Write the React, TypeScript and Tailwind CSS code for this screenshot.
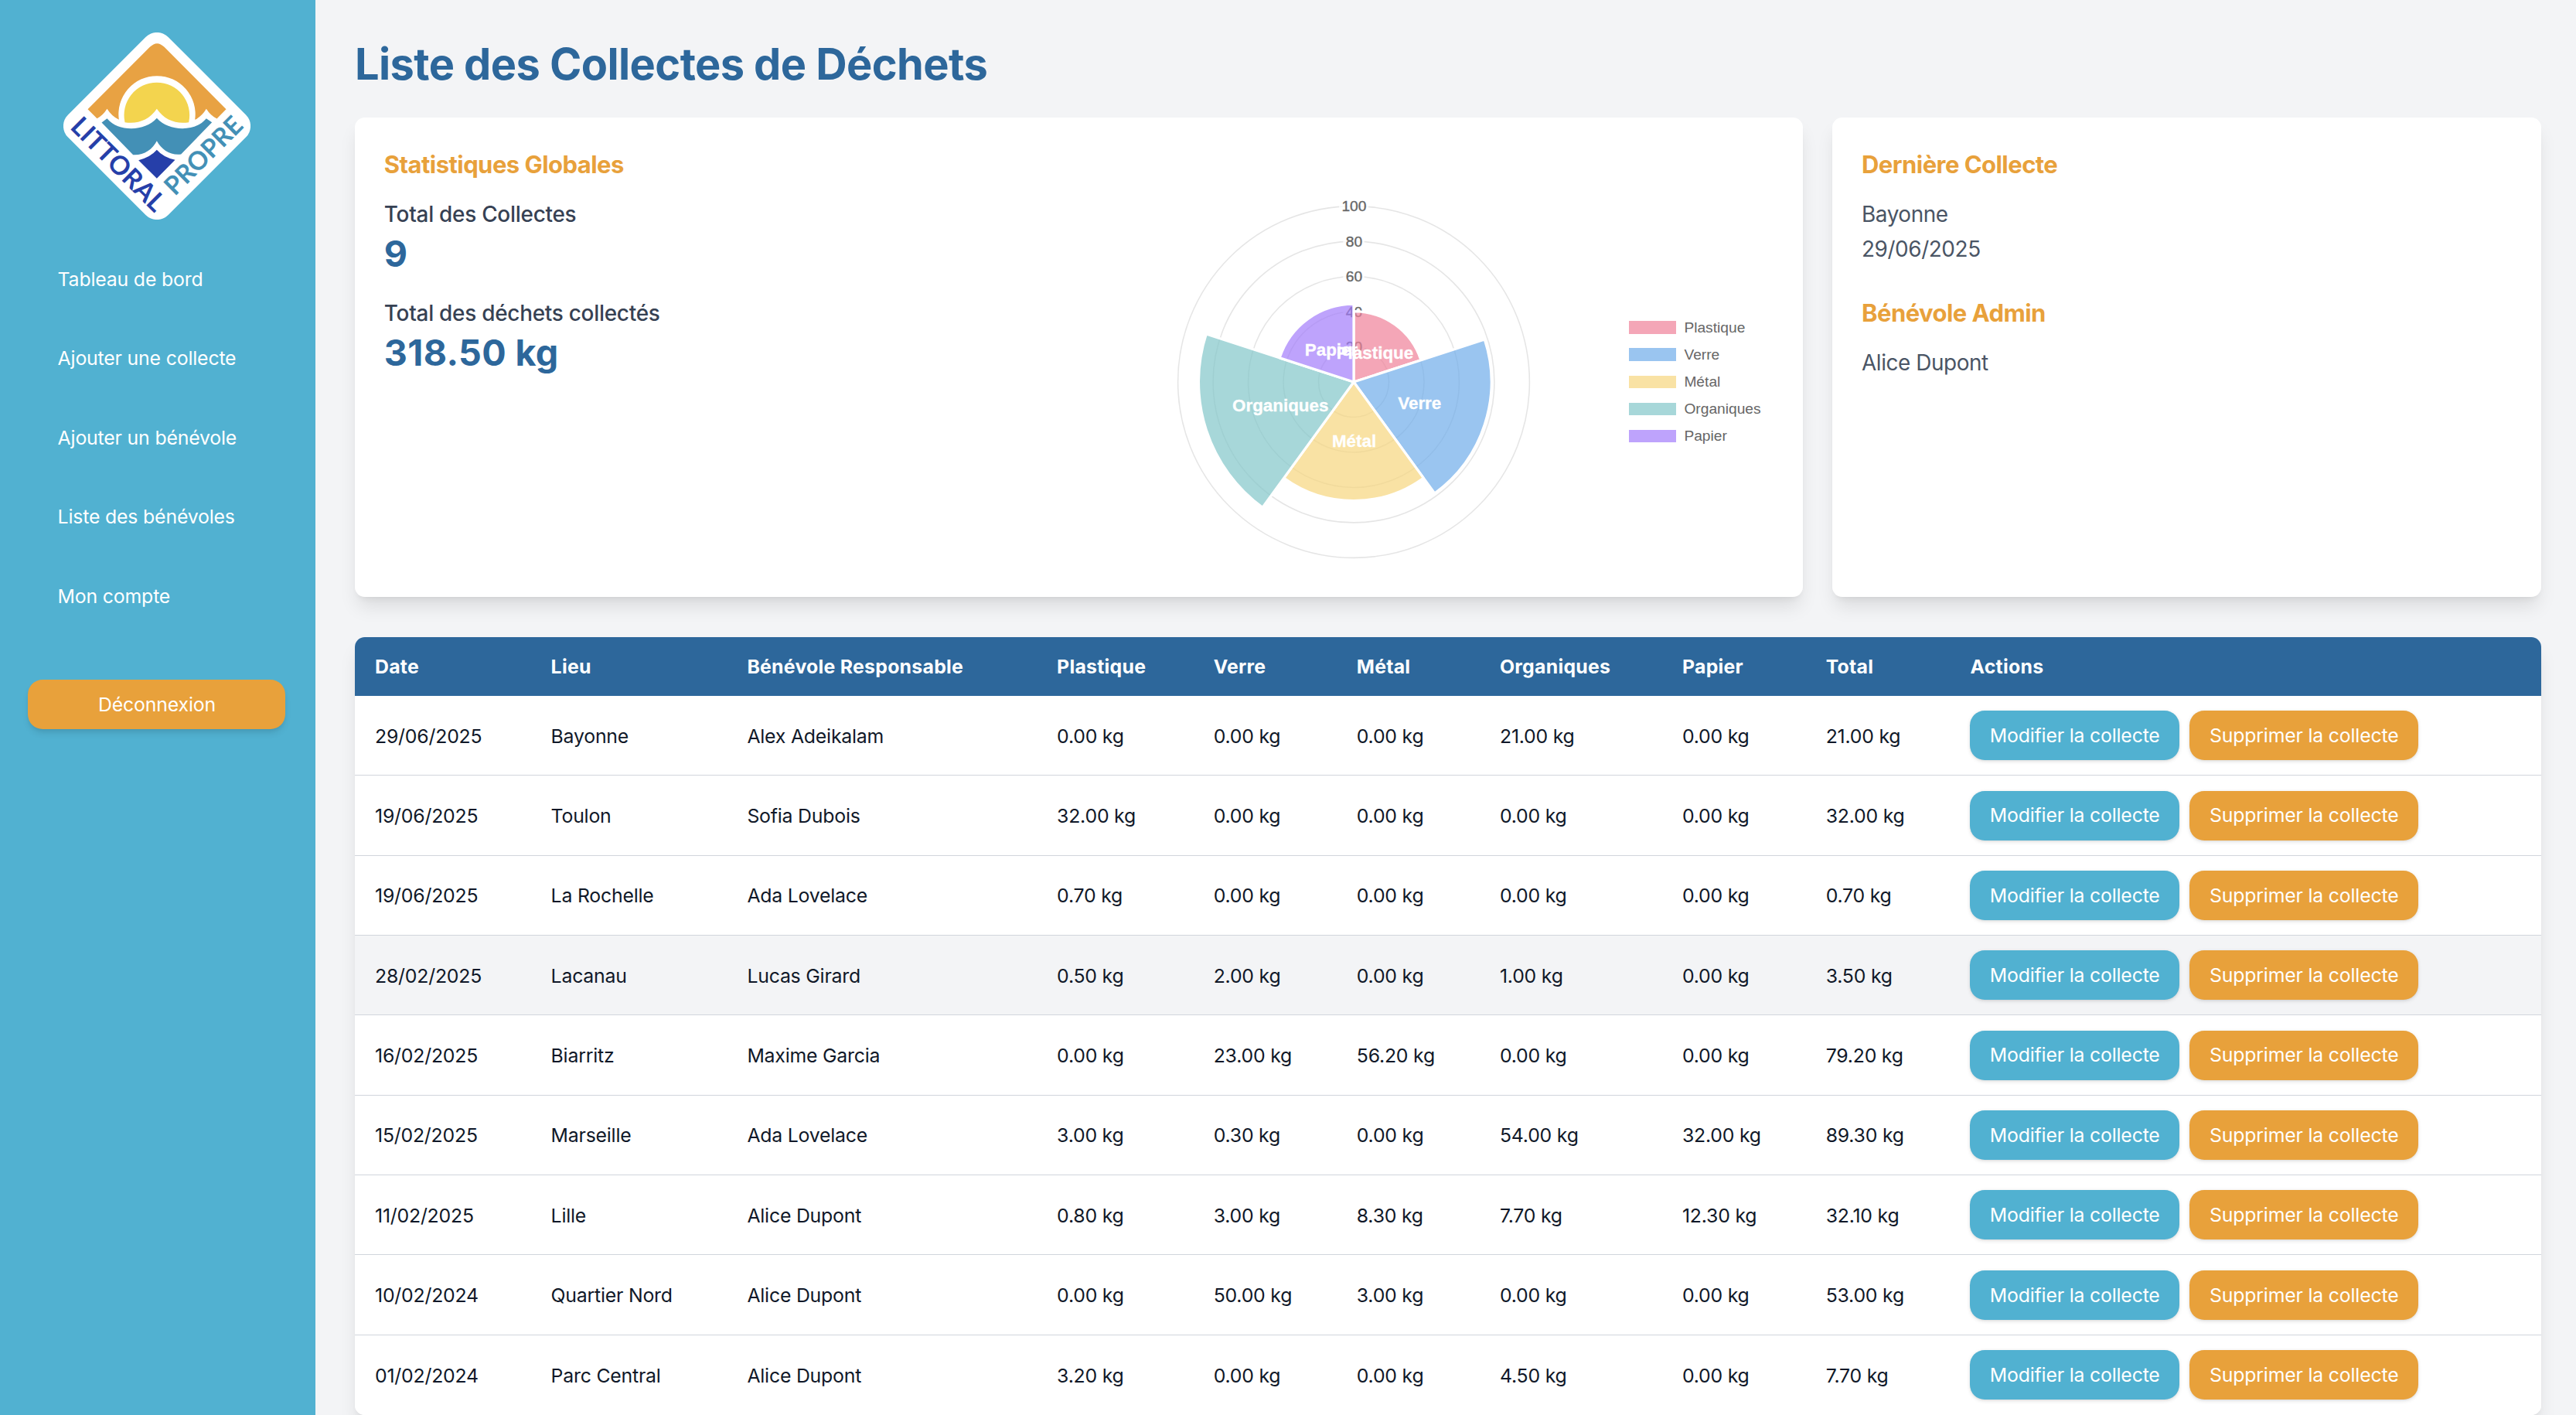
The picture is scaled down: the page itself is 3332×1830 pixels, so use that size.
import React from 'react';

const NAV = [
  'Tableau de bord',
  'Ajouter une collecte',
  'Ajouter un bénévole',
  'Liste des bénévoles',
  'Mon compte',
];

const HEADERS = [
  'Date',
  'Lieu',
  'Bénévole Responsable',
  'Plastique',
  'Verre',
  'Métal',
  'Organiques',
  'Papier',
  'Total',
  'Actions',
];

const ROWS: string[][] = [
  ['29/06/2025', 'Bayonne', 'Alex Adeikalam', '0.00', '0.00', '0.00', '21.00', '0.00', '21.00'],
  ['19/06/2025', 'Toulon', 'Sofia Dubois', '32.00', '0.00', '0.00', '0.00', '0.00', '32.00'],
  ['19/06/2025', 'La Rochelle', 'Ada Lovelace', '0.70', '0.00', '0.00', '0.00', '0.00', '0.70'],
  ['28/02/2025', 'Lacanau', 'Lucas Girard', '0.50', '2.00', '0.00', '1.00', '0.00', '3.50'],
  ['16/02/2025', 'Biarritz', 'Maxime Garcia', '0.00', '23.00', '56.20', '0.00', '0.00', '79.20'],
  ['15/02/2025', 'Marseille', 'Ada Lovelace', '3.00', '0.30', '0.00', '54.00', '32.00', '89.30'],
  ['11/02/2025', 'Lille', 'Alice Dupont', '0.80', '3.00', '8.30', '7.70', '12.30', '32.10'],
  ['10/02/2024', 'Quartier Nord', 'Alice Dupont', '0.00', '50.00', '3.00', '0.00', '0.00', '53.00'],
  ['01/02/2024', 'Parc Central', 'Alice Dupont', '3.20', '0.00', '0.00', '4.50', '0.00', '7.70'],
];

const HIGHLIGHTED_ROW = 3;

const SLICES = [
  { label: 'Plastique', value: 40.2, color: 'rgb(239,128,152)' },
  { label: 'Verre', value: 78.3, color: 'rgb(111,172,234)' },
  { label: 'Métal', value: 67.5, color: 'rgb(246,214,126)' },
  { label: 'Organiques', value: 88.2, color: 'rgb(129,198,201)' },
  { label: 'Papier', value: 44.3, color: 'rgb(162,124,251)' },
];

const GRID =
  'grid grid-cols-[227.6px_253.8px_400.7px_202.6px_185.1px_185.2px_236px_185.7px_186.9px_1fr]';

function Logo() {
  return (
    <svg viewBox="65 65.5 725 726" className="h-[242px] w-[242px]">
      <rect x="152.5" y="153.5" width="550" height="550" rx="62" fill="#fff" transform="rotate(45 427.5 428.5)" />
      <path
        d="M159 363 L400 122 Q428 94 456 122 L696 363 L660 400 Q636 389 619 362 Q602 391 575 404 A149 149 0 1 0 280 404 Q252 391 234 362 Q217 389 195 399 Z"
        fill="#e8a243"
      />
      <path d="M303 414 A127 127 0 1 1 551 414 C505 422 457 407 427 362 C397 407 349 422 303 414 Z" fill="#f3d44e" />
      <path
        d="M213 415 L234 399 C258 427 291 438 328 438 C367 438 402 425 427 398 C452 425 487 438 527 438 C563 438 595 427 619 399 L641 414 L521 538 C480 543 445 520 427 486 C410 520 375 543 335 540 Z"
        fill="#4390b6"
      />
      <path d="M427 521 Q452 550 498 560 L427 632 L356 561 Q402 550 427 521 Z" fill="#263fa9" />
      <text
        transform="translate(87 436) rotate(45)"
        fontFamily="Lato, sans-serif"
        fontWeight="700"
        fontSize="101"
        textLength="468"
        lengthAdjust="spacingAndGlyphs"
        fill="#263fa9"
      >
        LITTORAL
      </text>
      <text
        transform="translate(497 702) rotate(-45)"
        fontFamily="Lato, sans-serif"
        fontWeight="700"
        fontSize="99"
        textLength="382"
        lengthAdjust="spacingAndGlyphs"
        fill="#4390b6"
      >
        PROPRE
      </text>
    </svg>
  );
}

function Sidebar() {
  return (
    <aside className="flex w-[408px] shrink-0 flex-col bg-[#51b1d1] px-9 text-[24.8px] tracking-[-0.0065em] text-white">
      <div className="mt-[42px] ml-[45.5px]">
        <Logo />
      </div>
      <nav className="mt-[26px] flex flex-col pl-[38.6px]">
        {NAV.map((item) => (
          <a key={item} className="flex h-[102.5px] items-center">
            {item}
          </a>
        ))}
      </nav>
      <button className="mt-[56.5px] mr-[3px] h-16 rounded-[19.2px] bg-[#e8a13b] pt-px pl-px shadow-[0_6.4px_9.6px_-1.6px_rgba(0,0,0,0.1),0_3.2px_6.4px_-3.2px_rgba(0,0,0,0.1)]">
        Déconnexion
      </button>
    </aside>
  );
}

function PolarChart() {
  const cx = 230;
  const cy = 240;
  const max = 227.4;
  const point = (r: number, deg: number) => {
    const a = (deg * Math.PI) / 180;
    return [cx + r * Math.cos(a), cy + r * Math.sin(a)];
  };
  return (
    <svg viewBox="0 0 460 480" className="h-[480px] w-[460px]" fontFamily='"Liberation Sans", sans-serif'>
      {[20, 40, 60, 80, 100].map((v) => (
        <circle key={v} cx={cx} cy={cy} r={(max * v) / 100} fill="none" stroke="rgba(0,0,0,0.1)" strokeWidth="1.6" />
      ))}
      {[20, 40, 60, 80, 100].map((v) => {
        const y = cy - (max * v) / 100;
        const w = v === 100 ? 38 : 27.5;
        return (
          <g key={v}>
            <rect x={cx - w / 2} y={y - 12.8} width={w} height="25.6" fill="rgba(255,255,255,0.75)" />
            <text x={cx + 0.4} y={y + 6.6} textAnchor="middle" fontSize="19.2" fill="#666" stroke="#666" strokeWidth="0.35">
              {v}
            </text>
          </g>
        );
      })}
      {SLICES.map((s, i) => {
        const r = (max * s.value) / 100;
        const [x1, y1] = point(r, -90 + 72 * i);
        const [x2, y2] = point(r, -18 + 72 * i);
        return (
          <path
            key={s.label}
            d={`M${cx} ${cy} L${x1} ${y1} A${r} ${r} 0 0 1 ${x2} ${y2} Z`}
            fill={s.color}
            fillOpacity="0.7"
            stroke="#fff"
            strokeWidth="3.2"
            strokeLinejoin="bevel"
          />
        );
      })}
      {SLICES.map((s, i) => {
        const [x, y] = point((max * s.value) / 200, -54 + 72 * i);
        return (
          <text
            key={s.label}
            x={x + 0.6}
            y={y + 7}
            textAnchor="middle"
            fontSize="22.4"
            fontWeight="700"
            fill="#fff"
            stroke="#fff"
            strokeWidth="0.3"
          >
            {s.label}
          </text>
        );
      })}
    </svg>
  );
}

function Legend() {
  return (
    <ul className="ml-[126px] flex flex-col font-['Liberation_Sans',sans-serif] text-[19.2px] text-[#666]">
      {SLICES.map((s) => (
        <li key={s.label} className="flex h-[35.2px] items-center">
          <span className="h-[16.4px] w-[61.6px] opacity-70" style={{ backgroundColor: s.color }} />
          <span className="ml-[10px] pt-px">{s.label}</span>
        </li>
      ))}
    </ul>
  );
}

const CARD =
  'rounded-[12.8px] bg-white px-[37.8px] pt-[39.4px] shadow-[0_16px_24px_-4.8px_rgba(0,0,0,0.1),0_6.4px_9.6px_-6.4px_rgba(0,0,0,0.1)]';
const CARD_TITLE = 'mb-[19.2px] text-[31px] leading-[44.8px] font-bold tracking-[-0.0175em] text-[#e8a13b]';
const STAT_LABEL = 'text-[27.9px] leading-[44.8px] font-medium tracking-[-0.009em] text-gray-700';
const STAT_VALUE = 'text-[46.6px] leading-[57.6px] font-bold tracking-[0.008em] text-[#2d679b]';
const ACTION =
  'h-16 whitespace-nowrap rounded-[19.2px] pt-px text-center tracking-[-0.007em] text-white shadow-[0_1.6px_4.8px_rgba(0,0,0,0.1),0_1.6px_3.2px_-1.6px_rgba(0,0,0,0.1)]';

function Summary() {
  return (
    <section className="grid h-[620px] grid-cols-3 gap-[38.4px]">
      <div className={`${CARD} col-span-2 flex`}>
        <div className="w-[1024px] shrink-0">
          <h2 className={CARD_TITLE}>Statistiques Globales</h2>
          <p className={STAT_LABEL}>Total des Collectes</p>
          <p className={STAT_VALUE}>9</p>
          <p className={`${STAT_LABEL} mt-[25.6px]`}>Total des déchets collectés</p>
          <p className={STAT_VALUE}>318.50 kg</p>
        </div>
        <div className="mt-[62.4px] flex h-[480px] items-center">
          <PolarChart />
          <Legend />
        </div>
      </div>
      <div className={CARD}>
        <h2 className={CARD_TITLE}>Dernière Collecte</h2>
        <div className="mb-[38.4px] text-[27.9px] leading-[44.8px] tracking-[-0.015em] text-gray-600">
          <p>Bayonne</p>
          <p>29/06/2025</p>
        </div>
        <h2 className={CARD_TITLE}>Bénévole Admin</h2>
        <p className="text-[27.9px] leading-[44.8px] tracking-[-0.015em] text-gray-600">Alice Dupont</p>
      </div>
    </section>
  );
}

function CollectTable() {
  return (
    <section
      role="table"
      className="mt-[52px] overflow-hidden rounded-[12.8px] bg-white text-[24.8px] shadow-[0_16px_24px_-4.8px_rgba(0,0,0,0.1),0_6.4px_9.6px_-6.4px_rgba(0,0,0,0.1)]"
    >
      <div role="row" className={`${GRID} h-[76px] items-center bg-[#2d679b] font-bold tracking-[0.011em] text-white`}>
        {HEADERS.map((h) => (
          <div key={h} role="columnheader" className="pt-[2px] pl-[26px]">
            {h}
          </div>
        ))}
      </div>
      {ROWS.map((row, i) => (
        <div
          key={i}
          role="row"
          className={`${GRID} h-[103.35px] items-center border-gray-300 tracking-[-0.008em] text-gray-900 ${
            i === HIGHLIGHTED_ROW ? 'bg-gray-100' : 'bg-white'
          } ${i < ROWS.length - 1 ? 'border-b' : ''}`}
        >
          {row.map((cell, j) => (
            <div key={j} role="cell" className="pt-[2px] pl-[26px]">
              {j > 2 ? `${cell} kg` : cell}
            </div>
          ))}
          <div role="cell" className="flex gap-[12.8px] self-start pt-[19.2px] pl-[25.6px]">
            <button className={`${ACTION} w-[271.2px] bg-[#51b1d1]`}>Modifier la collecte</button>
            <button className={`${ACTION} w-[296.3px] bg-[#e8a13b]`}>Supprimer la collecte</button>
          </div>
        </div>
      ))}
    </section>
  );
}

export default function App() {
  return (
    <div className="flex h-[1830px] w-[3332px] overflow-hidden bg-gray-100 font-[Inter,sans-serif]">
      <Sidebar />
      <main className="w-[2924px] pt-[51px] pr-[44.6px] pl-[51px]">
        <h1 className="mb-[37px] text-[55.9px] leading-[64px] font-bold tracking-[-0.0101em] text-[#2d679b]">
          Liste des Collectes de Déchets
        </h1>
        <Summary />
        <CollectTable />
      </main>
    </div>
  );
}
